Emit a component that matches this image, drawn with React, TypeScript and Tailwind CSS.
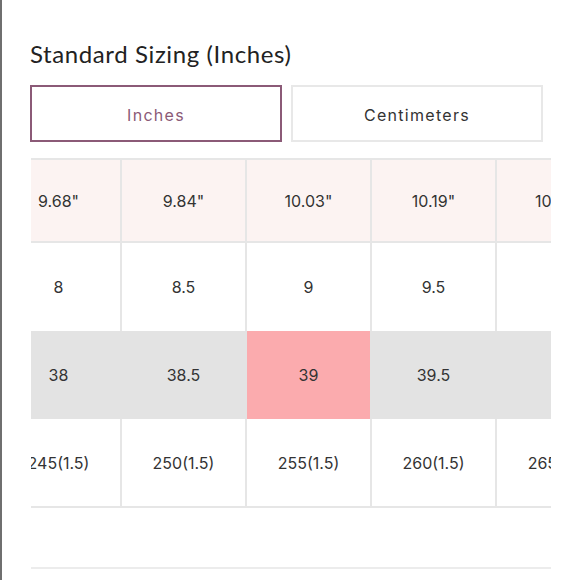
import React from "react";

const inches = ['9.68"', '9.84"', '10.03"', '10.19"', '10.37"'];
const us = ["8", "8.5", "9", "9.5", ""];
const eu = ["38", "38.5", "39", "39.5", ""];
const mm = ["245(1.5)", "250(1.5)", "255(1.5)", "260(1.5)", "265(1.5)"];

function Row({ values, className, selected }: { values: string[]; className: string; selected?: number }) {
    return (
        <div className={`flex ${className}`}>
            {values.map((v, i) => (
                <div
                    key={i}
                    className={`w-[125px] shrink-0 flex items-center justify-center border-r-2 ${
                        i === selected ? "bg-[#fbabae] border-[#e3e3e3]" : "border-inherit"
                    }`}
                >
                    {v}
                </div>
            ))}
        </div>
    );
}

export default function App() {
    const [unit, setUnit] = React.useState("in");

    return (
        <div
            className="w-[580px] h-[580px] bg-white border-l-2 border-[#6f6f6f] pl-[28px] overflow-hidden text-[#333]"
            style={{ fontFamily: "Inter, 'Liberation Sans', sans-serif" }}
        >
            <h1
                className="pt-[38px] text-[24px] leading-[32px] text-[#222] tracking-[0.6px]"
                style={{ fontFamily: "Lato, 'Open Sans', sans-serif" }}
            >
                Standard Sizing (Inches)
            </h1>

            <div className="mt-[15px] grid grid-cols-[252px_252px] gap-[9px]">
                <button
                    onClick={() => setUnit("in")}
                    className={`h-[57px] pt-[3px] border-2 text-[16px] tracking-[1.3px] ${
                        unit === "in" ? "border-[#8b5a77] text-[#8b5a77]" : "border-[#e8e8e8] text-[#333]"
                    }`}
                >
                    Inches
                </button>
                <button
                    onClick={() => setUnit("cm")}
                    className={`h-[57px] pt-[3px] border-2 text-[16px] tracking-[1.3px] ${
                        unit === "cm" ? "border-[#8b5a77] text-[#8b5a77]" : "border-[#e8e8e8] text-[#333]"
                    }`}
                >
                    Centimeters
                </button>
            </div>

            <div className="mt-[16px] ml-[1px] w-[520px] overflow-hidden text-[16px]">
                <div className="ml-[-34px] w-[630px]">
                    <Row values={inches} className="h-[85px] bg-[#fcf3f2] border-y-2 border-[#e6e6e6]" />
                    <Row values={us} className="h-[88px] bg-white border-[#e6e6e6]" />
                    <Row values={eu} className="h-[88px] bg-[#e3e3e3] border-[#e3e3e3]" selected={2} />
                    <Row values={mm} className="h-[89px] bg-white border-b-2 border-[#e6e6e6]" />
                </div>
                <div className="h-[61px] border-b-2 border-[#ececec]" />
            </div>
        </div>
    );
}
